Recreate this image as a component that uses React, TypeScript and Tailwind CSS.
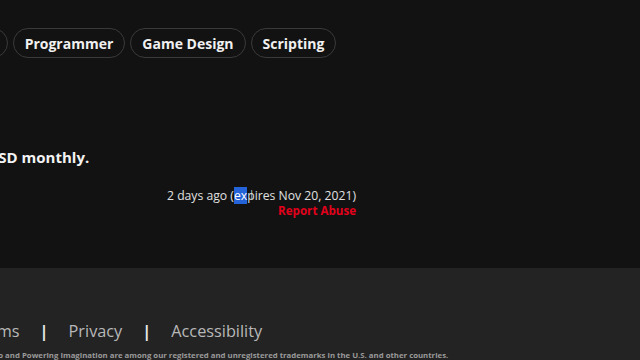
export default function App() {
  const tags = ["Builder", "Programmer", "Game Design", "Scripting"];

  return (
    <div
      className="flex h-[360px] w-[640px] flex-col overflow-hidden bg-[#121212] text-white"
      style={{ fontFamily: '"Open Sans", "Liberation Sans", sans-serif' }}
    >
      {/* job post body */}
      <div className="h-[268px] shrink-0">
        <div className="-ml-[67px] flex gap-[5px] pt-[28px]">
          {tags.map((t) => (
            <span
              key={t}
              className="flex h-[30px] items-center rounded-full border border-[#3a3a3a] px-[11px] text-[14px] font-bold text-[#f0f0f0]"
            >
              {t}
            </span>
          ))}
        </div>

        <p className="-ml-[13px] mt-[89px] text-[15px] font-bold leading-[20px] text-[#f2f2f2]">
          USD monthly.
        </p>

        <div className="mt-[20px] flex w-[356px] flex-col items-end">
          <p className="text-[12.2px] leading-[17px] text-[#e0e0e0]">
            2 days ago (
            <span className="relative bg-[#2563d8] text-white">
              ex
              <span className="absolute -right-[6px] top-[-1px] text-[13px] font-light text-[#dcdcdc]">
                I
              </span>
            </span>
            pires Nov 20, 2021)
          </p>
          <p className="text-[11.6px] font-bold leading-[14px] text-[#e3001b]">
            Report Abuse
          </p>
        </div>
      </div>

      {/* footer */}
      <footer className="flex-1 bg-[#232323]">
        <div className="-ml-[28px] mt-[53px] flex items-center text-[16.3px] leading-[20px] text-[#b8b8b8]">
          <span>Terms</span>
          <span className="mx-[20px] font-bold text-[#e8e8e8]">|</span>
          <span>Privacy</span>
          <span className="mx-[20px] font-bold text-[#e8e8e8]">|</span>
          <span>Accessibility</span>
        </div>
        <p className="-ml-[88px] mt-[8px] whitespace-nowrap text-[7.8px] font-bold leading-[12px] text-[#9a9a9a]">
          Roblox, the Roblox logo and Powering Imagination are among our registered and unregistered trademarks in the U.S. and other countries.
        </p>
      </footer>
    </div>
  );
}
